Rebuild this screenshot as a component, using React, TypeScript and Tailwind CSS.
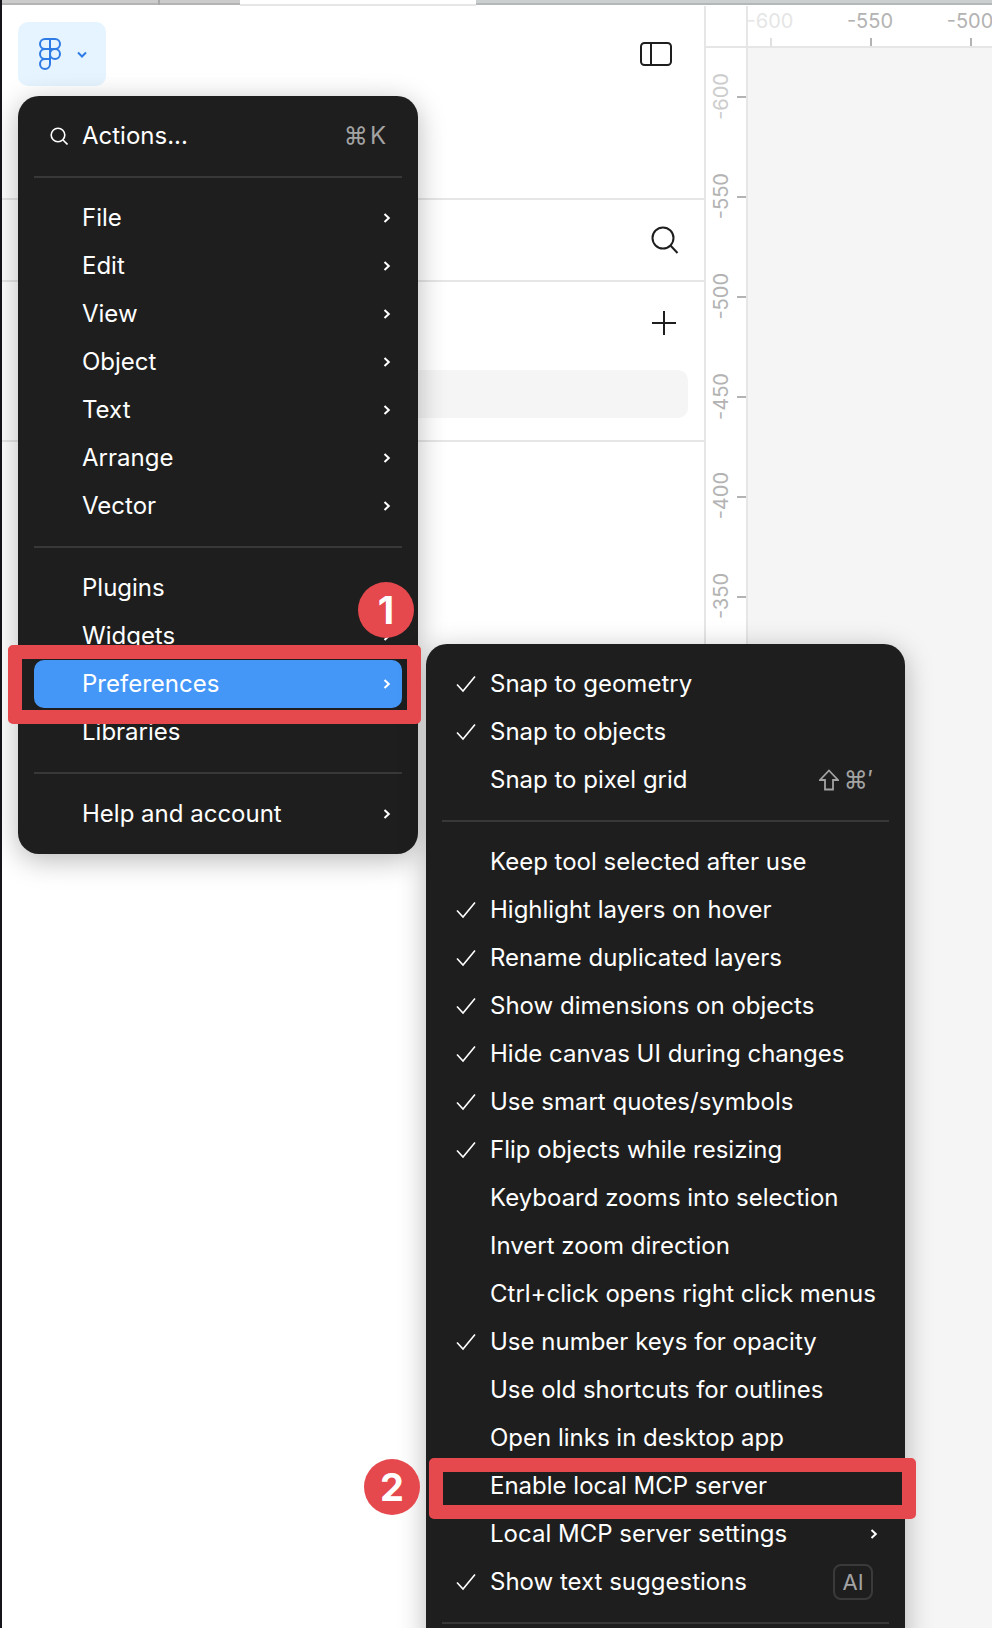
import React from "react";

const font = { fontFamily: '"Inter", "DejaVu Sans", sans-serif' };

type Row = { label: string; checked?: boolean; arrow?: boolean };

const mainGroups: string[][] = [
  ["File", "Edit", "View", "Object", "Text", "Arrange", "Vector"],
  ["Plugins", "Widgets", "Preferences", "Libraries"],
  ["Help and account"],
];

const editorPrefs: Row[] = [
  { label: "Keep tool selected after use" },
  { label: "Highlight layers on hover", checked: true },
  { label: "Rename duplicated layers", checked: true },
  { label: "Show dimensions on objects", checked: true },
  { label: "Hide canvas UI during changes", checked: true },
  { label: "Use smart quotes/symbols", checked: true },
  { label: "Flip objects while resizing", checked: true },
  { label: "Keyboard zooms into selection" },
  { label: "Invert zoom direction" },
  { label: "Ctrl+click opens right click menus" },
  { label: "Use number keys for opacity", checked: true },
  { label: "Use old shortcuts for outlines" },
  { label: "Open links in desktop app" },
  { label: "Enable local MCP server" },
  { label: "Local MCP server settings", arrow: true },
];

function Chevron() {
  return (
    <svg width="8" height="12" viewBox="0 0 8 12" fill="none" className="shrink-0">
      <path d="M1.5 2 L5.8 6 L1.5 10" stroke="#fff" strokeWidth="2" />
    </svg>
  );
}

function Check() {
  return (
    <svg width="20" height="18" viewBox="0 0 20 18" fill="none">
      <path d="M1 9.5 L7 16 L19 1.5" stroke="#fff" strokeWidth="1.6" />
    </svg>
  );
}

function Divider() {
  return <div className="mx-4 my-4 h-[2px] bg-[#383838]" />;
}

function MenuRow({
  label,
  checked,
  arrow,
  active,
  children,
}: Row & { active?: boolean; children?: React.ReactNode }) {
  return (
    <div className={`mx-4 flex h-12 items-center rounded-[10px] pr-[11px] ${active ? "bg-[#4597f7]" : ""}`}>
      <div className="flex w-[48px] shrink-0 items-center pl-[14px]">{checked && <Check />}</div>
      <span className="flex-1 whitespace-nowrap text-[24px] leading-none text-white">{label}</span>
      {children}
      {arrow && <Chevron />}
    </div>
  );
}

function TopTick({ label, faded }: { label: string; faded?: boolean }) {
  return (
    <div className="flex h-full w-[100px] shrink-0 flex-col items-center">
      <span className={`mt-[3px] h-[29px] pr-[2px] text-[20px] leading-[24px] ${faded ? "text-[#e6e6e6]" : "text-[#b3b3b3]"}`}>{label}</span>
      <div className={`h-2 w-[2px] ${faded ? "bg-[#e0e0e0]" : "bg-[#b3b3b3]"}`} />
    </div>
  );
}

function SideTick({ label, faded }: { label: string; faded?: boolean }) {
  return (
    <div className="flex h-[100px] items-center justify-end">
      <span className={`mb-[2px] mr-2 rotate-180 text-[20px] leading-[16px] [writing-mode:vertical-rl] ${faded ? "text-[#cccccc]" : "text-[#b3b3b3]"}`}>{label}</span>
      <div className="h-[2px] w-[9px] bg-[#b3b3b3]" />
    </div>
  );
}

export default function App() {
  return (
    <div className="relative flex h-[1628px] w-[992px] overflow-hidden bg-white" style={font}>
      <div className="w-[2px] shrink-0 bg-[#15151b]" />

      <div className="flex min-w-0 flex-1 flex-col">
        {/* browser tabs */}
        <div className="flex h-[6px] shrink-0 items-start">
          <div className="h-[5px] w-[156px] border-b-2 border-[#b4b4b4] bg-[#cbcbcb]" />
          <div className="h-[5px] w-[2px] bg-[#a8a8a8]" />
          <div className="h-[5px] w-[80px] border-b-2 border-[#b4b4b4] bg-[#cbcbcb]" />
          <div className="h-[6px] w-[236px] border-b-2 border-[#e6e6e6] bg-white" />
          <div className="h-[5px] flex-1 border-b-2 border-[#b4b8b8] bg-[#cbcfcf]" />
        </div>

        <div className="flex min-h-0 flex-1">
          {/* left panel */}
          <div className="w-[702px] shrink-0">
            <div className="flex h-[194px] items-start justify-between border-b-2 border-[#e6e6e6] pl-4 pr-[32px] pt-4">
              <div className="flex h-16 w-[88px] items-center gap-[16px] rounded-[10px] bg-[#e5f4ff] pl-[21px]">
                <svg width="22" height="32" viewBox="0 0 22 32" fill="none" stroke="#2f7be5" strokeWidth="2">
                  <path d="M11 1H6a5 5 0 0 0 0 10h5z" />
                  <path d="M11 1h5a5 5 0 0 1 0 10h-5z" />
                  <path d="M11 11H6a5 5 0 0 0 0 10h5z" />
                  <circle cx="16" cy="16" r="5" />
                  <path d="M11 21H6a5 5 0 1 0 5 5z" />
                </svg>
                <svg width="10" height="7" viewBox="0 0 10 7" fill="none">
                  <path d="M1 1.5 L5 5.5 L9 1.5" stroke="#2f7be5" strokeWidth="2" />
                </svg>
              </div>
              <svg className="mt-[20px]" width="32" height="24" viewBox="0 0 32 24" fill="none" stroke="#1e1e1e" strokeWidth="2">
                <rect x="1" y="1" width="30" height="22" rx="3.5" />
                <path d="M11 1V23" />
              </svg>
            </div>
            <div className="flex h-[82px] items-center justify-end border-b-2 border-[#e6e6e6] pr-[25px]">
              <svg width="28" height="28" viewBox="0 0 28 28" fill="none" stroke="#1e1e1e" strokeWidth="2">
                <circle cx="12" cy="12" r="10.5" />
                <path d="M19.5 19.5 L26.5 27" />
              </svg>
            </div>
            <div className="h-[160px] border-b-2 border-[#e6e6e6] pl-8 pr-4">
              <div className="flex h-[88px] items-start justify-end pr-[12px] pt-[29px]">
                <svg width="24" height="24" viewBox="0 0 24 24" fill="none" stroke="#1e1e1e" strokeWidth="2">
                  <path d="M12 0V24M0 12H24" />
                </svg>
              </div>
              <div className="h-12 rounded-[10px] bg-[#f5f5f5]" />
            </div>
          </div>

          {/* rulers and canvas */}
          <div className="flex min-w-0 flex-1 flex-col border-l-2 border-[#e6e6e6]">
            <div className="flex h-[42px] shrink-0 border-b-2 border-[#e6e6e6]">
              <div className="w-[42px] shrink-0 border-r-2 border-[#e6e6e6]" />
              <div className="flex flex-1 overflow-hidden">
                <div className="-ml-[27px] flex">
                  <TopTick label="-600" faded />
                  <TopTick label="-550" />
                  <TopTick label="-500" />
                </div>
              </div>
            </div>
            <div className="flex min-h-0 flex-1">
              <div className="w-[42px] shrink-0 border-r-2 border-[#e6e6e6]">
                <div className="-mt-[1px]">
                  <SideTick label="-600" faded />
                  <SideTick label="-550" />
                  <SideTick label="-500" />
                  <SideTick label="-450" />
                  <SideTick label="-400" />
                  <SideTick label="-350" />
                </div>
              </div>
              <div className="flex-1 bg-[#f5f5f5]" />
            </div>
          </div>
        </div>
      </div>

      {/* main menu */}
      <div className="absolute left-[18px] top-[96px] w-[400px] rounded-[21px] bg-[#1e1e1e] py-4 shadow-[0_6px_28px_rgba(0,0,0,0.28)]">
        <div className="mx-4 flex h-12 items-center pr-[16px]">
          <div className="flex w-[48px] shrink-0 items-center pl-[16px]">
            <svg width="18" height="18" viewBox="0 0 18 18" fill="none" stroke="#fff" strokeWidth="1.6">
              <circle cx="8" cy="8" r="6.8" />
              <path d="M13 13 L17.5 17.5" />
            </svg>
          </div>
          <span className="flex-1 text-[24px] leading-none text-white">Actions...</span>
          <span className="flex items-center gap-[2px] text-[24px] leading-none text-[#a3a3a3]">
            <span>⌘</span>
            <span>K</span>
          </span>
        </div>
        {mainGroups.map((group, i) => (
          <div key={i}>
            <Divider />
            {group.map((name) => (
              <MenuRow key={name} label={name} arrow={name !== "Libraries"} active={name === "Preferences"} />
            ))}
          </div>
        ))}
      </div>

      {/* preferences submenu */}
      <div className="absolute left-[426px] top-[644px] w-[479px] rounded-[21px] bg-[#1e1e1e] py-4 shadow-[0_6px_28px_rgba(0,0,0,0.28)]">
        <MenuRow label="Snap to geometry" checked />
        <MenuRow label="Snap to objects" checked />
        <MenuRow label="Snap to pixel grid">
          <div className="flex items-center gap-[5px] pr-[5px] text-[24px] leading-none text-[#a3a3a3]">
            <svg width="20" height="22" viewBox="0 0 20 22" fill="none" stroke="#a3a3a3" strokeWidth="1.8">
              <path d="M10 1.5 L19 11 H14 V20.5 H6 V11 H1 Z" />
            </svg>
            <span>⌘′</span>
          </div>
        </MenuRow>
        <Divider />
        {editorPrefs.map((row) => (
          <MenuRow key={row.label} {...row} />
        ))}
        <MenuRow label="Show text suggestions" checked>
          <div className="mr-[5px] flex h-9 w-10 items-center justify-center rounded-lg border-2 border-[#3a3a3a] text-[22px] leading-none text-[#a3a3a3]">AI</div>
        </MenuRow>
        <Divider />
      </div>

      {/* callouts */}
      <div className="absolute left-2 top-[645px] h-[79px] w-[413px] rounded-[5px] border-[14px] border-[#e5484d]" />
      <div className="absolute left-[358px] top-[582px] flex h-14 w-14 items-center justify-center rounded-full bg-[#e5484d] text-[38px] font-bold leading-none text-white">1</div>
      <div className="absolute left-[429px] top-[1458px] h-[61px] w-[487px] rounded-[5px] border-[14px] border-[#e5484d]" />
      <div className="absolute left-[364px] top-[1459px] flex h-14 w-14 items-center justify-center rounded-full bg-[#e5484d] text-[38px] font-bold leading-none text-white">2</div>
    </div>
  );
}
